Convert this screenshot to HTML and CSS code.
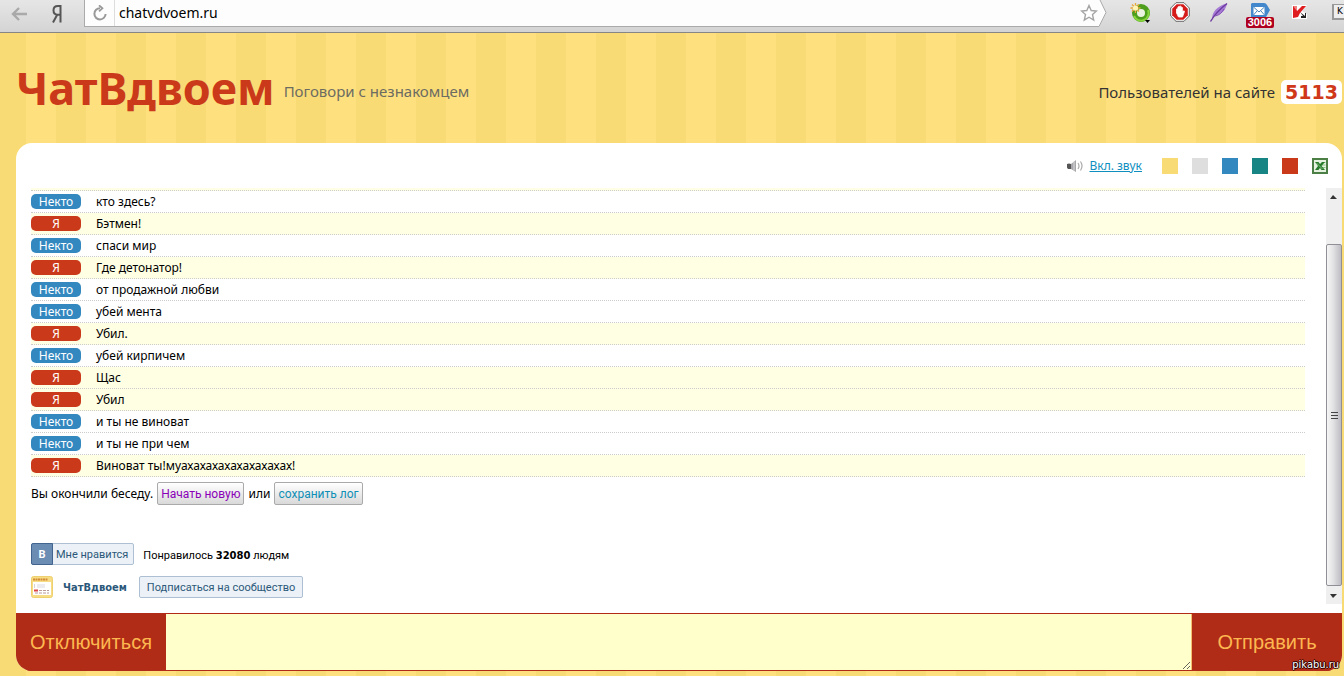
FILE: index.html
```html
<!DOCTYPE html>
<html lang="ru">
<head>
<meta charset="utf-8">
<title>ЧатВдвоем</title>
<link rel="stylesheet" href="styles.css">
</head>
<body>
<div class="page">
  <nav class="browser">
    <button class="nav-btn back" aria-label="Назад"><svg width="16" height="14" viewBox="0 0 16 14"><path d="M16 7H2M8 1L2 7l6 6" fill="none" stroke="#a9a9a9" stroke-width="2.400"/></svg></button>
    <button class="nav-btn yandex" aria-label="Яндекс"><svg width="12" height="18" viewBox="0 0 12 18"><path d="M9.500 17.500V1H7C4 1 2.500 2.800 2.500 5.300S4 9.700 6.500 9.700h3M6.200 9.700L2 17.500" fill="none" stroke="#555" stroke-width="2"/></svg></button>
    <div class="address">
      <button class="reload" aria-label="Обновить"><svg width="16" height="16" viewBox="0 0 16 16"><path d="M8 3.200A5.600 5.600 0 1 0 13.600 9" fill="none" stroke="#999" stroke-width="2"/><path d="M7 .3l3.400 3-3.400 3" fill="none" stroke="#999" stroke-width="1.800"/></svg></button>
      <input class="url" type="text" value="chatvdvoem.ru" aria-label="Адрес">
      <svg class="star" width="18" height="18" viewBox="0 0 18 18"><path d="M9 1.500l2.200 5 5.300.5-4 3.600 1.200 5.400L9 13.200 4.300 16l1.200-5.400L1.500 7l5.300-.5z" fill="#fff" stroke="#a4a4a4" stroke-width="1.400"/></svg>
    </div>
    <svg class="arrow-end" width="8" height="27" viewBox="0 0 8 27"><path d="M0 0h1l6 12.500L0 27z" fill="#fdfdfd"/><path d="M1 0l6 12.500L0 26.500" fill="none" stroke="#aaa"/></svg>
    <div class="extensions">
      <svg width="22" height="22" viewBox="0 0 22 22"><circle cx="11" cy="11" r="6.500" fill="#e9f3e0" stroke="#4d9e1c" stroke-width="5"/><path d="M4 14a7.500 7.500 0 0 0 14-6" fill="none" stroke="#86d43c" stroke-width="2"/><path d="M5.500 1v10M.5 6h10M2 2.500l7 7M9 2.500l-7 7" stroke="#e9a53a" stroke-width="1.300"/><circle cx="5.500" cy="6" r="2.600" fill="#fff3b5"/><path d="M15 18h5l-2.500 3z" fill="#000"/></svg>
      <svg width="20" height="20" viewBox="0 0 20 20"><path d="M6 .7h8L19.300 6v8L14 19.300H6L.7 14V6z" fill="#fff" stroke="#666"/><path d="M6.700 2.200h6.600l4.500 4.500v6.600l-4.500 4.500H6.700l-4.500-4.500V6.700z" fill="#d51a1a"/><path d="M6.500 11V7q.7-1 1.400 0V5q.8-1 1.500 0V4.400q.8-.8 1.500 0V5.500q.8-.8 1.500 0V10l1.200-1.200q1 0 .8 1L12.500 15H8.500z" fill="#fff" stroke="#fff" stroke-width=".8"/></svg>
      <svg width="20" height="20" viewBox="0 0 20 20"><path d="M4 17C4 10 9 4 19 1.500c-1 6-5 11-13 12.500z" fill="#a57bd3"/><path d="M2.500 19.500Q8 10 19 1.500" fill="none" stroke="#6c3aa0" stroke-width="1.400"/><path d="M7 14q6-1 9-7" fill="none" stroke="#8450b8"/></svg>
      <span class="mail"><svg width="19" height="14" viewBox="0 0 19 14"><path d="M1 0h12q2 0 3 2l3 5-4 7H0V1z" fill="#4388cc"/><path d="M2.500 4h11v8h-11z" fill="#fff"/><path d="M2.500 4L8 9l5.500-5M2.500 12L6 8M13.500 12L10 8" fill="none" stroke="#4a83ba"/></svg><span class="mail-count">3006</span></span>
      <svg class="low" width="15" height="14" viewBox="0 0 15 14"><path d="M0 0h15L10 6l5 3v5H0z" fill="#fff"/><path d="M1 1h4v5l5-5h4L8 8l-2 4-5 1z" fill="#df1c20"/><path d="M1 1h4v5z" fill="#f08080"/><path d="M8 7l5 4V8h1v5H9v-2h2z" fill="#222"/></svg>
      <span class="key">K</span>
    </div>
  </nav>

  <header class="header">
    <h1 class="logo">ЧатВдвоем</h1>
    <p class="tagline">Поговори с незнакомцем</p>
    <p class="online">Пользователей на сайте <strong class="online-count">5113</strong></p>
  </header>

  <main class="card">
    <div class="tools">
      <svg width="16" height="12" viewBox="0 0 16 12"><path d="M1 4h3l5-4v12L4 9H1z" fill="#a8a8ac"/><path d="M0 4q2-1 4 0v5H1q-2-2-1-5z" fill="#555"/><path d="M7 1.500v9" stroke="#ddd"/><path d="M11 3q2 3 0 6M13.500 1.500q3 4.500 0 9" fill="none" stroke="#aaa" stroke-width="1.200"/></svg>
      <a class="sound" href="#">Вкл. звук</a>
      <div class="themes">
        <button class="swatch yellow" aria-label="Жёлтая тема"></button>
        <button class="swatch grey" aria-label="Серая тема"></button>
        <button class="swatch blue" aria-label="Синяя тема"></button>
        <button class="swatch teal" aria-label="Бирюзовая тема"></button>
        <button class="swatch red" aria-label="Красная тема"></button>
        <button class="swatch" aria-label="Excel"><svg width="16" height="16" viewBox="0 0 16 16"><path d="M1 1h14v14H1z" fill="#e4f2df" stroke="#4b7f45" stroke-width="2"/><path d="M10 4.500h3.500M10 7h3.500M10 9.500h3.500" stroke="#8fc588"/><path d="M3 4h3.500l1.500 2L10 4h3L9.500 8l3.500 4H9.500L8 10l-1.500 2H3l3-4z" fill="#277c2c"/><path d="M4.500 5l6 6" stroke="#7fbb7a"/></svg></button>
      </div>
    </div>

    <div class="scroll">
      <div class="chat">
        <div class="edge"></div>
        <div class="row"><span class="who">Некто</span><span>кто здесь?</span></div>
        <div class="row me"><span class="who">Я</span><span>Бэтмен!</span></div>
        <div class="row"><span class="who">Некто</span><span>спаси мир</span></div>
        <div class="row me"><span class="who">Я</span><span>Где детонатор!</span></div>
        <div class="row"><span class="who">Некто</span><span>от продажной любви</span></div>
        <div class="row"><span class="who">Некто</span><span>убей мента</span></div>
        <div class="row me"><span class="who">Я</span><span>Убил.</span></div>
        <div class="row"><span class="who">Некто</span><span>убей кирпичем</span></div>
        <div class="row me"><span class="who">Я</span><span>Щас</span></div>
        <div class="row me"><span class="who">Я</span><span>Убил</span></div>
        <div class="row"><span class="who">Некто</span><span>и ты не виноват</span></div>
        <div class="row"><span class="who">Некто</span><span>и ты не при чем</span></div>
        <div class="row me"><span class="who">Я</span><span>Виноват ты!муахахахахахахахахах!</span></div>
        <div class="ended"><span>Вы окончили беседу.</span><button class="btn visited">Начать новую</button><span>или</span><button class="btn">сохранить лог</button></div>
        <div class="vk">
          <button class="like"><span class="like-logo">B</span><span class="like-text">Мне нравится</span></button>
          <span class="liked">Понравилось <b>32080</b> людям</span>
        </div>
        <div class="vk group">
          <svg width="22" height="22" viewBox="0 0 22 22"><rect x=".5" y=".5" width="21" height="21" rx="2" fill="#f5dc85" stroke="#efd06e"/><path d="M2 3.500h15" stroke="#d58a35" stroke-width="2" stroke-dasharray="2 .5"/><path d="M2 6h18v13H2z" fill="#fff"/><path d="M6 8h8v4H6z" fill="#ececf0"/><path d="M3 9h1M3 11h1" stroke="#aaa"/><path d="M3 14.500h4" stroke="#d44" stroke-width="2"/><path d="M8 14.500h10M4 17h14" stroke="#b99" stroke-dasharray="3 1"/></svg>
          <a class="group-name" href="#">ЧатВдвоем</a>
          <button class="subscribe">Подписаться на сообщество</button>
        </div>
      </div>
      <div class="bar" aria-hidden="true">
        <svg class="bar-arrow" width="16" height="17" viewBox="0 0 16 17"><path d="M4 11l3-4 4 4z" fill="#333"/></svg>
        <div class="track"><div class="thumb"><i></i><i></i><i></i></div></div>
        <svg class="bar-arrow" width="16" height="17" viewBox="0 0 16 17"><path d="M4 7h7l-4 4z" fill="#333"/></svg>
      </div>
    </div>

    <form class="composer">
      <button class="action" type="button">Отключиться</button>
      <textarea class="message" aria-label="Сообщение"></textarea>
      <button class="action" type="button">Отправить</button>
    </form>
  </main>
  <span class="watermark">pikabu.ru</span>
</div>
</body>
</html>
```

FILE: styles.css
```css
* { box-sizing: border-box; }
body {
  margin: 0;
  background: repeating-linear-gradient(90deg, #f9db75 0 26px, #ffe07e 26px 56px, #f9db75 56px 60px);
  font: 12px/16px "Noto Sans", "Open Sans", sans-serif;
  color: #000;
}
button { font: inherit; padding: 0; border: 0; background: none; cursor: pointer; }
h1, p { margin: 0; }
svg { display: block; flex: none; }
.page { position: relative; min-height: 100vh; display: flex; flex-direction: column; overflow: hidden; }

.browser {
  height: 33px;
  display: flex;
  align-items: flex-start;
  background: linear-gradient(#e6e6e6, #d4d4d4);
  border-bottom: 1px solid #868686;
}
.nav-btn { height: 27px; display: grid; place-items: center; }
.back { width: 38px; }
.yandex { width: 38px; margin-right: 8px; }
.address {
  flex: 1;
  height: 27px;
  display: flex;
  align-items: center;
  background: #fdfdfd;
  border-left: 1px solid #aaa;
  border-bottom: 1px solid #aaa;
}
.reload { width: 30px; height: 26px; display: grid; place-items: center; border-right: 1px solid #ddd; }
.url { flex: 1; min-width: 0; border: 0; padding: 0 4px; background: none; font: 14px/20px "Noto Sans", sans-serif; outline: 0; }
.star { margin-right: 1px; }
.arrow-end { margin-right: 23px; }
.extensions { display: flex; align-items: flex-start; gap: 18px; padding-top: 2px; }
.mail { display: flex; flex-direction: column; align-items: center; width: 28px; padding-top: 1px; }
.mail-count {
  width: 28px;
  height: 11px;
  background: #b00020;
  border-radius: 2px;
  color: #fff;
  font: bold 11px/11px "Liberation Sans", sans-serif;
  text-align: center;
}
.low { margin-top: 3px; }
.key { width: 12px; height: 16px; margin: 2px 0 0 7px; padding-left: 3px; border: solid #999; border-width: 1px 0 2px 2px; background: #eee; font: 9px/13px "DejaVu Sans", sans-serif; }

.header { height: 110px; display: flex; align-items: center; padding: 0 2px 0 16px; font-size: 15px; line-height: 24px; }
.logo { color: #ca3a1a; font-size: 45px; line-height: 56px; font-weight: bold; }
.tagline { margin-left: 9px; padding-top: 6px; color: #6c6c62; }
.online { margin-left: auto; padding-top: 8px; display: flex; align-items: center; gap: 6px; color: #333; }
.online-count { padding: 0 4px; border-radius: 5px; background: #fff; color: #d0381a; font: bold 19px/24px "DejaVu Sans", sans-serif; }

.card { flex: 1; display: flex; flex-direction: column; margin: 0 2px 5px 16px; border-radius: 16px; background: #fff; overflow: hidden; }
.tools { height: 45px; display: flex; align-items: center; justify-content: flex-end; padding-right: 14px; }
.sound { margin: 0 20px 0 6px; color: #0f8fc0; }
.themes { display: flex; gap: 14px; }
.swatch { width: 16px; height: 16px; }
.yellow { background: #f9db75; }
.grey { background: #dedede; }
.blue { background: #3388bf; }
.teal { background: #188585; }
.red { background: #ca3a1a; }

.scroll { flex: 1; display: flex; margin-bottom: 9px; }
.chat { flex: 1; margin: 0 21px 0 15px; }
.edge { height: 3px; background: #ffffe6; border-bottom: 1px dotted #ccc; }
.row { height: 22px; display: flex; align-items: center; gap: 15px; border-bottom: 1px dotted #ccc; }
.me { background: #ffffe4; }
.who { width: 50px; height: 15px; border-radius: 5px; background: #3388bf; color: #fff; line-height: 15px; text-align: center; }
.me .who { background: #ca3a1a; }
.ended { display: flex; align-items: center; gap: 4px; padding-top: 5px; }
.btn { height: 23px; padding: 0 3px; border: 1px solid #aaa; border-radius: 2px; background: linear-gradient(#fff, #d9d9d9); color: #0f8fb5; font-family: Roboto, sans-serif; }
.visited { color: #8a00b8; }
.vk { display: flex; align-items: center; margin-top: 38px; font-family: Roboto, sans-serif; font-size: 11px; }
.like { height: 22px; display: flex; border: 1px solid #adbfd3; border-radius: 2px; background: #ebf1f6; color: #2b587a; line-height: 21px; }
.like-logo { width: 22px; margin: -1px 0 -1px -1px; border: 1px solid #42648f; background: #6b8cb3; color: #fff; font-weight: bold; border-radius: 2px 0 0 2px; }
.like-text { padding: 0 5px 0 3px; }
.liked { margin-left: 9px; padding-top: 3px; }
.liked b { font: bold 10px/16px "DejaVu Sans", sans-serif; }
.group { margin-top: 11px; }
.group-name { margin: 2px 12px 0 10px; color: #2b587a; font: bold 11px/16px "DejaVu Sans Condensed", sans-serif; text-decoration: none; }
.subscribe { height: 22px; padding: 1px 7px 0; border: 1px solid #adbfd3; border-radius: 2px; background: #ebf1f6; color: #2b587a; }

.bar { width: 16px; display: flex; flex-direction: column; background: #efefef; }
.track { flex: 1; display: flex; padding: 39px 0 1px; }
.thumb { flex: 1; display: flex; flex-direction: column; align-items: center; justify-content: center; gap: 2px; border: 1px solid #8f8f95; border-radius: 2px; background: linear-gradient(90deg, #f6f6f6, #e2e2e4 45%, #bcbcc2); }
.thumb i { width: 7px; height: 1px; background: #444; }

.composer { display: flex; height: 58px; border: solid #b02c16; border-width: 1px 0; background: #b02c16; }
.action { width: 150px; color: #fdb750; font: 20px/24px "Liberation Sans", Arial, sans-serif; }
.message { flex: 1; min-width: 0; border: 0; border-right: 1px solid #f4c070; background: #ffffcb; outline: 0; resize: vertical; }

.watermark { position: absolute; right: 5px; bottom: 3px; color: #fff; font: 11px/16px "DejaVu Sans Condensed", sans-serif; text-shadow: 1px 0 #200, -1px 0 #200, 0 1px #200, 0 -1px #200; }
```
